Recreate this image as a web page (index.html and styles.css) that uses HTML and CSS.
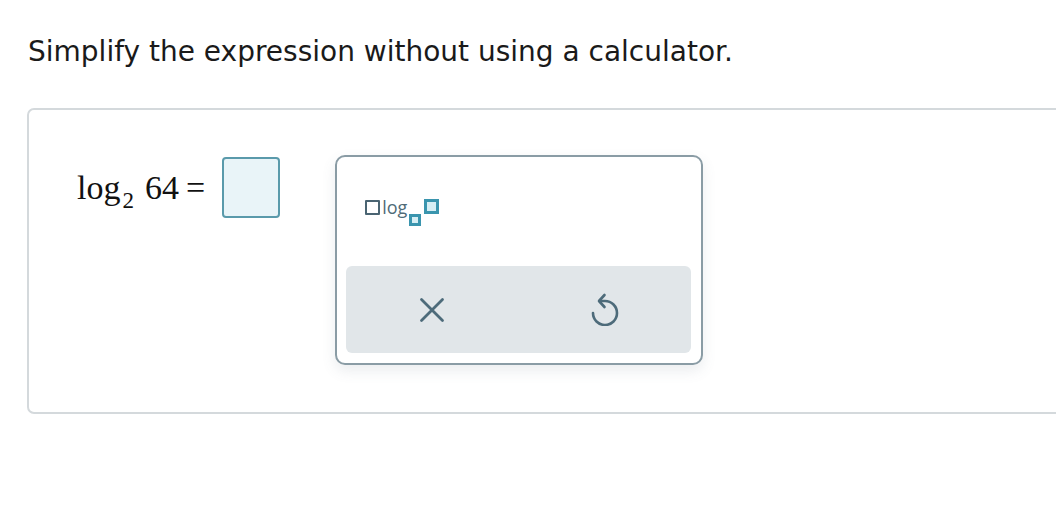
FILE: index.html
```html
<!DOCTYPE html>
<html>
<head>
<meta charset="utf-8">
<link rel="stylesheet" href="styles.css">
</head>
<body>
<div class="page">
  <h1 class="prompt">Simplify the expression without using a calculator.</h1>
  <div class="card">
    <div class="math-row">
      <div class="expr"><span class="fn">log</span><sub class="base">2</sub><span class="arg">64</span><span class="eq">=</span></div>
      <div class="answer"></div>
    </div>
    <div class="palette">
      <div class="templates">
        <div class="tpl">
          <span class="box-dark"></span><span class="tpl-log">log</span><span class="box-sub"></span><span class="box-arg"></span>
        </div>
      </div>
      <div class="actions">
        <button class="act" aria-label="Clear">
          <svg width="26" height="26" viewBox="0 0 26 26"><path d="M2.5 2.5 L23.5 23.5 M23.5 2.5 L2.5 23.5" stroke="#4d6b7a" stroke-width="2.8" stroke-linecap="round" fill="none"/></svg>
        </button>
        <button class="act" aria-label="Undo">
          <svg class="undo" width="30" height="36" viewBox="0 0 30 36"><path d="M3 23 A12 12 0 1 0 15 11 H9.5" stroke="#4d6b7a" stroke-width="2.6" stroke-linecap="round" fill="none"/><path d="M14.5 5 L9 11 L14.5 17" stroke="#4d6b7a" stroke-width="2.6" stroke-linecap="round" stroke-linejoin="round" fill="none"/></svg>
        </button>
      </div>
    </div>
  </div>
</div>
</body>
</html>
```
FILE: styles.css
```css
html, body {
  margin: 0;
  padding: 0;
  background: #ffffff;
  overflow: hidden;
}
.page {
  width: 1056px;
  height: 520px;
  overflow: hidden;
}
.prompt {
  margin: 0;
  padding: 36px 0 0 28px;
  font-family: "DejaVu Sans", Verdana, sans-serif;
  font-weight: normal;
  font-size: 28px;
  line-height: 32px;
  color: #1a1a1a;
}
.card {
  margin: 40px 0 0 27px;
  width: 1060px;
  height: 302px;
  border: 2px solid #d4d9dc;
  border-radius: 7px;
  box-sizing: content-box;
  display: flex;
  align-items: flex-start;
  padding: 0;
}
.math-row {
  display: flex;
  align-items: center;
  margin: 47px 0 0 48px;
}
.expr {
  font-family: "Liberation Serif", "Times New Roman", serif;
  font-size: 34px;
  color: #111;
  display: flex;
  align-items: baseline;
}
.base {
  font-size: 23px;
  position: relative;
  top: 9px;
  vertical-align: baseline;
  margin: 0 11px 0 2px;
}
.eq {
  margin-left: 7px;
}
.answer {
  margin-left: 17px;
  width: 54px;
  height: 57px;
  border: 2px solid #5a9aab;
  border-radius: 4px;
  background: #e9f4f8;
}
.palette {
  margin: 45px 0 0 55px;
  width: 345px;
  height: 196px;
  border: 2px solid #8a9ca5;
  border-radius: 10px;
  background: #fff;
  box-shadow: 0 6px 14px rgba(90, 110, 120, 0.12);
  display: flex;
  flex-direction: column;
  padding: 0 10px 10px 9px;
  box-sizing: content-box;
}
.templates {
  flex: 1;
  padding: 42px 0 0 19px;
}
.tpl {
  display: flex;
  align-items: flex-start;
  height: 26px;
}
.box-dark {
  width: 11px;
  height: 11px;
  border: 2.5px solid #4a6472;
  border-radius: 1px;
  margin-top: 1px;
}
.tpl-log {
  font-family: "Open Sans", sans-serif;
  font-size: 18px;
  line-height: 17px;
  color: #4f6b78;
  margin-left: 2px;
}
.box-sub {
  width: 6px;
  height: 6px;
  border: 3px solid #3a95ae;
  background: #d6eef4;
  margin: 15px 0 0 2px;
}
.box-arg {
  width: 9px;
  height: 9px;
  border: 3px solid #3a95ae;
  background: #d6eef4;
  margin: 0 0 0 3px;
}
.actions {
  height: 87px;
  background: #e1e6e9;
  border-radius: 6px;
  display: flex;
}
.act {
  flex: 1;
  border: none;
  background: transparent;
  display: flex;
  align-items: center;
  justify-content: center;
  padding: 0;
  cursor: pointer;
}
.undo {
  margin-top: -4px;
}
```
